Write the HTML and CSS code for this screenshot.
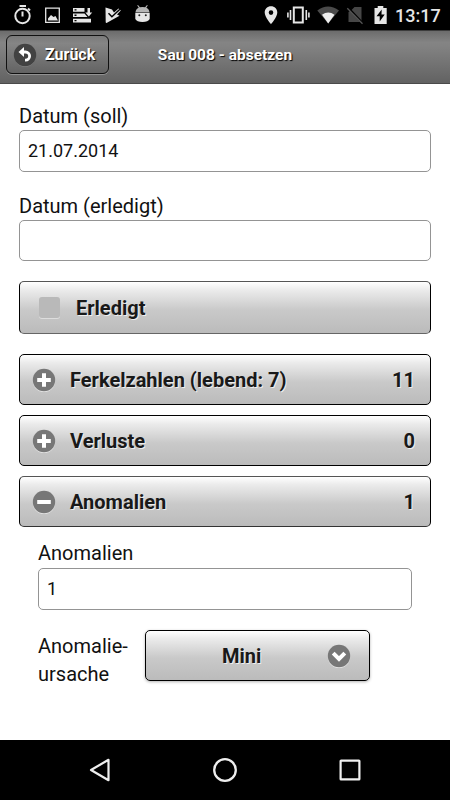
FILE: index.html
```html
<!DOCTYPE html>
<html lang="de">
<head>
<meta charset="utf-8">
<title>Sau 008 - absetzen</title>
<link rel="stylesheet" href="styles.css">
</head>
<body>
<div class="status">
  <svg class="status-left" width="160" height="30" viewBox="0 0 160 30">
    <g fill="none" stroke="#e6e6e6" stroke-width="2">
      <circle cx="22.5" cy="16" r="7.2"/>
      <path d="M19.5 6H26M22.5 11.500V16.500M28 8.500l2 2"/>
    </g>
    <path fill="#e6e6e6" d="M48 18.500l3-3.500 2.500 2 2-1 2.500 4.500H48z"/>
    <path fill="none" stroke="#e6e6e6" stroke-width="1.300" d="M45.700 8.200H59.300V22.300H45.700z"/>
    <path fill="#e6e6e6" d="M73 8h11.500v3.700H73zM73 13.400h11.500l3 3.700H73zM73 18.700h18v3.700H73zM87.500 8h2.500v4.500h2.200l-3.400 4-3.500-4h2.200z"/>
    <path fill="#000" d="M74.500 9.200h2v1.300h-2zM74.500 14.600h2v1.300h-2zM74.500 19.900h2v1.300h-2z"/>
    <path fill="#e6e6e6" d="M105.500 7.500L112 9.500 114 12.500 118.500 8.500 120.800 10.500 117 14.500 119.500 15.700 107 22.800q-1.300.5-1.300-.8z"/>
    <path fill="none" stroke="#000" stroke-width="1.500" d="M108.500 13.200l3.400 3.500 8-7.500"/>
    <path fill="#b5b5b5" d="M135.500 12.200q.3-3.500 3.200-4.500L137.200 5.500l.8-.4 1.900 2.200q2.600-.5 5.200 0l1.900-2.200.8.400-1.500 2.200q2.900 1 3.200 4.500z"/>
    <path fill="#e6e6e6" d="M135.300 12.700h14.400v6.300q-1.500 3-7.200 3t-7.200-3z"/>
    <circle cx="139.300" cy="15.300" r="1" fill="#222"/><circle cx="145.800" cy="15.300" r="1" fill="#222"/>
  </svg>
  <svg class="status-right" width="130" height="30" viewBox="260 0 130 30">
    <path fill="#e6e6e6" fill-rule="evenodd" d="M271 6.300c-3.600 0-6.300 2.700-6.300 6.300 0 4.600 6.300 11.600 6.300 11.600s6.300-7 6.300-11.600c0-3.600-2.700-6.300-6.300-6.300zm0 4a2.300 2.300 0 1 1 0 4.600 2.300 2.300 0 0 1 0-4.600z"/>
    <path fill="none" stroke="#e6e6e6" stroke-width="2" d="M293.800 7.500h9v15h-9z"/>
    <path stroke="#e6e6e6" stroke-width="1.600" d="M290.500 10v10M306.300 10v10M287.900 12.500v5M308.900 12.500v5"/>
    <path fill="#4a4a4a" d="M317.300 10.500Q328 2.500 339 10.500L328.200 23.500z"/>
    <path fill="#eee" d="M322 14.800q6.200-4.500 12.500 0L328.200 23.500z"/>
    <path fill="#464646" d="M351 10.500l3.500-3.500H361.500V22H348.500V12z"/>
    <path stroke="#000" stroke-width="2" d="M348 7.500L363.500 24"/>
    <path stroke="#555" stroke-width="1.300" d="M347.300 8.300L362.500 23.800"/>
    <path fill="#e6e6e6" d="M374.500 8h3.200V6h5.600V8H386.700V24H374.500z"/>
    <path fill="#000" d="M381.700 9.500l-5.200 6.700h3.200V21.500l5-7h-3.200z"/>
  </svg>
  <span class="clock">13:17</span>
</div>
<header class="header">
  <a class="back">
    <svg width="24" height="24" viewBox="0 0 24 24"><circle cx="12" cy="12.700" r="11" fill="#8a8a8a"/><circle cx="12" cy="12" r="11.200" fill="#424242"/><path fill="none" stroke="#fff" stroke-width="2.800" d="M9 9H12.500a4.100 4.100 0 0 1 0 8.200H12"/><path fill="#fff" d="M11 4v10L5.500 9z"/></svg>
    <span>Zurück</span>
  </a>
  <h1 class="title">Sau 008 - absetzen</h1>
</header>
<main class="content">
  <label class="label">Datum (soll)</label>
  <div class="input">21.07.2014</div>
  <label class="label second">Datum (erledigt)</label>
  <div class="input empty"></div>
  <div class="bar check"><i class="box"></i><span>Erledigt</span></div>
  <div class="bar">
    <svg class="icon" width="24" height="24" viewBox="0 0 24 24"><circle cx="12" cy="13" r="11.200" fill="#e4e4e4"/><circle cx="12" cy="12" r="11.200" fill="#777"/><path stroke="#fff" stroke-width="4" d="M5.200 12H18.800M12 5.200V18.800"/></svg>
    <span>Ferkelzahlen (lebend: 7)</span><b class="count">11</b>
  </div>
  <div class="bar">
    <svg class="icon" width="24" height="24" viewBox="0 0 24 24"><circle cx="12" cy="13" r="11.200" fill="#e4e4e4"/><circle cx="12" cy="12" r="11.200" fill="#777"/><path stroke="#fff" stroke-width="4" d="M5.200 12H18.800M12 5.200V18.800"/></svg>
    <span>Verluste</span><b class="count">0</b>
  </div>
  <div class="bar open">
    <svg class="icon" width="24" height="24" viewBox="0 0 24 24"><circle cx="12" cy="13" r="11.200" fill="#e4e4e4"/><circle cx="12" cy="12" r="11.200" fill="#777"/><path stroke="#fff" stroke-width="4" d="M5.200 12H18.800"/></svg>
    <span>Anomalien</span><b class="count">1</b>
  </div>
  <section class="panel">
    <label class="label first">Anomalien</label>
    <div class="input">1</div>
    <div class="row">
      <label class="label wrap">Anomalie-<br>ursache</label>
      <div class="bar select"><span class="value">Mini</span>
        <svg class="icon" width="24" height="24" viewBox="0 0 24 24"><circle cx="12" cy="13" r="11.200" fill="#e4e4e4"/><circle cx="12" cy="12" r="11.200" fill="#777"/><path fill="none" stroke="#fff" stroke-width="4" d="M6.200 9.200L12 15l5.800-5.800"/></svg>
      </div>
    </div>
  </section>
</main>
<nav class="nav">
  <svg width="24" height="26" viewBox="0 0 24 26"><path fill="none" stroke="#eee" stroke-width="2.200" stroke-linejoin="round" d="M3 13L20.500 2.800v20.400z"/></svg>
  <svg width="26" height="26" viewBox="0 0 26 26"><circle cx="13" cy="13" r="10.800" fill="none" stroke="#eee" stroke-width="2.300"/></svg>
  <svg width="24" height="26" viewBox="0 0 24 26"><rect x="2.600" y="3.600" width="18.800" height="18.800" rx=".5" fill="none" stroke="#eee" stroke-width="2.200"/></svg>
</nav>
</body>
</html>
```
FILE: styles.css
```css
* { box-sizing: border-box; }
body {
  margin: 0;
  width: 450px;
  height: 800px;
  display: flex;
  flex-direction: column;
  overflow: hidden;
  background: #fff;
  color: #111;
  font-family: Roboto, "Liberation Sans", sans-serif;
  font-size: 20px;
}
svg { display: block; flex: none; }
.status {
  height: 30px;
  flex: none;
  display: flex;
  background: #000;
}
.status-right { margin-left: 100px; }
.clock {
  margin-left: 5px;
  color: #e6e6e6;
  font-size: 18px;
  font-weight: 500;
  line-height: 31px;
}
.header {
  height: 54px;
  flex: none;
  display: grid;
  grid-template-columns: 150px 150px 150px;
  padding-top: 4px;
  border-top: 1px solid #3c3c3c;
  border-bottom: 1px solid #4a4a4a;
  background: linear-gradient(#6c6c6c, #848484 22%, #828282 30%, #626262);
  color: #fff;
  font-weight: 700;
  text-shadow: 1px 1px 1px #000;
}
.back {
  display: flex;
  align-items: center;
  gap: 8px;
  width: 103px;
  height: 39px;
  margin-left: 6px;
  padding-left: 6px;
  border: 1px solid #111;
  border-radius: 6px;
  background: linear-gradient(#7a7a7a, #858585 20%, #636363);
  box-shadow: 0 1px 0 #929292;
  font-size: 16px;
}
.title {
  margin: 0;
  font-size: 15.5px;
  line-height: 41px;
  text-align: center;
  white-space: nowrap;
}
.content { flex: 1; padding: 18px 19px 0; }
.label { display: block; height: 28px; line-height: 28px; }
.second { margin-top: 20px; }
.first { height: 29px; }
.input {
  height: 42px;
  padding-left: 8px;
  border: 1px solid #949494;
  border-radius: 5px;
  font-size: 18px;
  line-height: 39px;
}
.empty { height: 41px; }
.bar {
  display: flex;
  align-items: center;
  height: 51px;
  margin-bottom: 10px;
  padding: 0 15px 0 12px;
  border: 1px solid #000;
  border-radius: 5px;
  background: linear-gradient(#fff, #ebebeb 16%, #c9c9c9 55%, #bbb);
  color: #191919;
  font-weight: 700;
  text-shadow: 1px 1px 0 #eee;
}
.icon { margin-right: 14px; }
.count { margin-left: auto; font-weight: 700; }
.check {
  height: 53px;
  margin: 20px 0;
  padding-left: 19px;
  border-color: #555 #000 #666 #000;
}
.box {
  width: 21px;
  height: 21px;
  margin-right: 16px;
  border-radius: 3px;
  background: #b9b9b9;
  box-shadow: 0 1px 0 #ddd;
}
.open { border-top-color: #555; border-bottom-color: #333; }
.panel { padding: 2px 19px 0; }
.row { display: flex; margin-top: 20px; }
.wrap { width: 107px; height: 56px; margin-top: 2px; }
.select { width: 225px; padding: 0; box-shadow: 0 1px 3px rgba(0, 0, 0, .3); }
.value { margin-left: 76px; }
.select .icon { margin: 0 18px 0 auto; }
.nav {
  height: 60px;
  flex: none;
  display: flex;
  align-items: center;
  justify-content: space-between;
  padding: 0 88px;
  background: #000;
}
```
